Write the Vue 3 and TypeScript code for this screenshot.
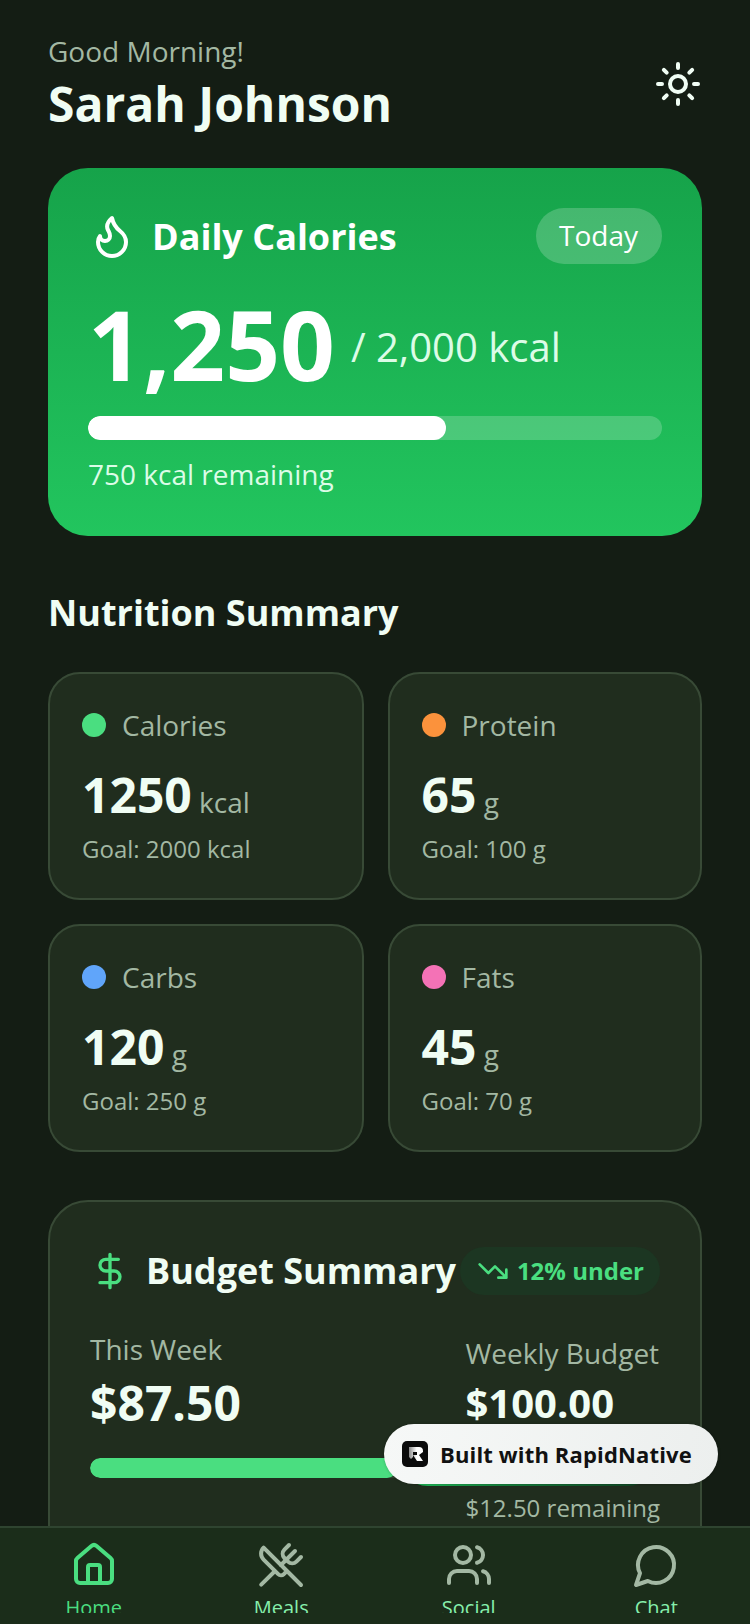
<script setup lang="ts">
const stats = [
  { label: 'Calories', value: '1250', unit: 'kcal', goal: 'Goal: 2000 kcal', color: '#4ade80' },
  { label: 'Protein', value: '65', unit: 'g', goal: 'Goal: 100 g', color: '#fb923c' },
  { label: 'Carbs', value: '120', unit: 'g', goal: 'Goal: 250 g', color: '#60a5fa' },
  { label: 'Fats', value: '45', unit: 'g', goal: 'Goal: 70 g', color: '#f472b6' },
]
</script>

<template>
  <div class="app">
    <main class="scroll">
      <header class="header">
        <div>
          <div class="greet">Good Morning!</div>
          <div class="name">Sarah Johnson</div>
        </div>
        <svg class="ic48 sun" viewBox="0 0 24 24" fill="none" stroke="#f0fdf4" stroke-width="2" stroke-linecap="round" stroke-linejoin="round">
          <circle cx="12" cy="12" r="4" />
          <path d="M12 2v2M12 20v2M4.93 4.93l1.41 1.41M17.66 17.66l1.41 1.41M2 12h2M20 12h2M6.34 17.66l-1.41 1.41M19.07 4.93l-1.41 1.41" />
        </svg>
      </header>

      <section class="hero">
        <div class="hero-top">
          <div class="hero-title">
            <svg class="ic48" viewBox="0 0 24 24" fill="none" stroke="#fff" stroke-width="2" stroke-linecap="round" stroke-linejoin="round">
              <path d="M8.5 14.5A2.5 2.5 0 0 0 11 12c0-1.38-.5-2-1-3-1.072-2.143-.224-4.054 2-6 .5 2.5 2 4.9 4 6.5 2 1.6 3 3.5 3 5.5a7 7 0 1 1-14 0c0-1.153.433-2.294 1-3a2.5 2.5 0 0 0 2.5 2.5z" />
            </svg>
            <span>Daily Calories</span>
          </div>
          <div class="today">Today</div>
        </div>
        <div class="hero-num">
          <span class="big">1,250</span>
          <span class="of">/ 2,000 kcal</span>
        </div>
        <div class="track"><div class="fill"></div></div>
        <div class="remain">750 kcal remaining</div>
      </section>

      <h2 class="section">Nutrition Summary</h2>
      <div class="grid">
        <div v-for="s in stats" :key="s.label" class="stat">
          <div class="stat-head">
            <span class="dot" :style="{ background: s.color }"></span>
            <span class="stat-label">{{ s.label }}</span>
          </div>
          <div class="stat-val"><b>{{ s.value }}</b> <span>{{ s.unit }}</span></div>
          <div class="goal">{{ s.goal }}</div>
        </div>
      </div>

      <section class="budget">
        <div class="b-top">
          <div class="b-title">
            <svg class="ic40" viewBox="0 0 24 24" fill="none" stroke="#4ade80" stroke-width="2" stroke-linecap="round" stroke-linejoin="round">
              <path d="M12 2v20M17 5H9.5a3.5 3.5 0 0 0 0 7h5a3.5 3.5 0 0 1 0 7H6" />
            </svg>
            <span>Budget Summary</span>
          </div>
          <div class="under">
            <svg class="ic32" viewBox="0 0 24 24" fill="none" stroke="#4ade80" stroke-width="2" stroke-linecap="round" stroke-linejoin="round">
              <path d="M22 17l-8.5-8.5-5 5L2 7M16 17h6v-6" />
            </svg>
            <span>12% under</span>
          </div>
        </div>
        <div class="b-body">
          <div class="b-left">
            <div class="b-label">This Week</div>
            <div class="b-val">$87.50</div>
            <div class="b-track"><div class="b-fill"></div></div>
          </div>
          <div class="b-right">
            <div class="b-label">Weekly Budget</div>
            <div class="b-val-r">$100.00</div>
            <div class="b-rem">$12.50 remaining</div>
          </div>
        </div>
      </section>
    </main>

    <nav class="tabs">
      <div class="tab">
        <svg class="ic48" viewBox="0 0 24 24" fill="none" stroke="#4ade80" stroke-width="2" stroke-linecap="round" stroke-linejoin="round">
          <path d="M15 21v-8a1 1 0 0 0-1-1h-4a1 1 0 0 0-1 1v8" />
          <path d="M3 10a2 2 0 0 1 .709-1.528l7-5.999a2 2 0 0 1 2.582 0l7 5.999A2 2 0 0 1 21 10v9a2 2 0 0 1-2 2H5a2 2 0 0 1-2-2z" />
        </svg>
        <span class="active">Home</span>
      </div>
      <div class="tab">
        <svg class="ic48" viewBox="0 0 24 24" fill="none" stroke="#a3b8a3" stroke-width="2" stroke-linecap="round" stroke-linejoin="round">
          <path d="m16 2-2.3 2.3a3 3 0 0 0 0 4.2l1.8 1.8a3 3 0 0 0 4.2 0L22 8" />
          <path d="M15 15 3.3 3.3a4.2 4.2 0 0 0 0 6l7.3 7.3c.7.7 2 .7 2.8 0L15 15Zm0 0 7 7" />
          <path d="m2.1 21.8 6.4-6.3" />
          <path d="m19 5-7 7" />
        </svg>
        <span>Meals</span>
      </div>
      <div class="tab">
        <svg class="ic48" viewBox="0 0 24 24" fill="none" stroke="#a3b8a3" stroke-width="2" stroke-linecap="round" stroke-linejoin="round">
          <path d="M16 21v-2a4 4 0 0 0-4-4H6a4 4 0 0 0-4 4v2" />
          <circle cx="9" cy="7" r="4" />
          <path d="M22 21v-2a4 4 0 0 0-3-3.87" />
          <path d="M16 3.13a4 4 0 0 1 0 7.75" />
        </svg>
        <span>Social</span>
      </div>
      <div class="tab">
        <svg class="ic48" viewBox="0 0 24 24" fill="none" stroke="#a3b8a3" stroke-width="2" stroke-linecap="round" stroke-linejoin="round">
          <path d="M7.9 20A9 9 0 1 0 4 16.1L2 22Z" />
        </svg>
        <span>Chat</span>
      </div>
    </nav>

    <div class="built">
      <span class="logo">
        <svg viewBox="0 0 26 26" width="26" height="26">
          <defs>
            <linearGradient id="rg" x1="0" x2="1" y1="0" y2="0">
              <stop offset="0" stop-color="#8a8a8a" />
              <stop offset="0.55" stop-color="#fff" />
            </linearGradient>
          </defs>
          <rect width="26" height="26" rx="5" fill="#0b0b0b" />
          <path d="M7 6h10a4 4 0 0 1 4 4v1l-4 3 4 6h-6l-4-6h4v-3H11v5l-2 2-2-2z" fill="url(#rg)" />
        </svg>
      </span>
      <span>Built with RapidNative</span>
    </div>
  </div>
</template>

<style>
html, body { margin: 0; background: #141d14; }
</style>

<style scoped>
.app {
  position: relative;
  width: 750px;
  height: 1624px;
  display: flex;
  flex-direction: column;
  overflow: hidden;
  background: #141d14;
  font-family: "Open Sans", "Noto Sans", sans-serif;
  color: #f0fdf4;
}
.scroll {
  flex: 1;
  min-height: 0;
  overflow: hidden;
  padding: 31px 48px 0;
}
.ic48 { width: 48px; height: 48px; flex: none; display: block; }
.ic40 { width: 40px; height: 40px; flex: none; display: block; }
.ic32 { width: 32px; height: 32px; flex: none; display: block; }
.sun { margin-top: 3px; }
.header { display: flex; justify-content: space-between; align-items: center; }
.greet { font-size: 28px; line-height: 40px; color: #a3b8a3; }
.name { font-size: 48px; line-height: 60px; font-weight: 700; margin-top: 3px; }
.hero {
  margin-top: 34px;
  height: 368px;
  box-sizing: border-box;
  padding: 40px;
  border-radius: 40px;
  background: linear-gradient(180deg, #16a34a, #22c55e);
  color: #fff;
}
.hero-top { display: flex; justify-content: space-between; align-items: center; }
.hero-title { display: flex; align-items: center; gap: 16px; font-size: 36px; font-weight: 700; }
.today {
  height: 56px;
  line-height: 54px;
  padding: 0 24px 0 23px;
  border-radius: 28px;
  background: rgba(255, 255, 255, 0.2);
  font-size: 28px;
}
.hero-num { display: flex; align-items: flex-end; gap: 16px; margin-top: 20px; }
.big { font-size: 96px; line-height: 120px; font-weight: 700; }
.of { font-size: 40px; line-height: 56px; color: #dcfce7; margin-bottom: 29px; }
.track { height: 24px; border-radius: 12px; background: rgba(255, 255, 255, 0.2); margin-top: 12px; overflow: hidden; }
.fill { width: 62.4%; height: 100%; border-radius: 12px; background: #fff; }
.remain { margin-top: 14px; font-size: 28px; line-height: 40px; color: #dcfce7; }
.section { margin: 53px 0 0; font-size: 36px; line-height: 48px; font-weight: 700; }
.grid { margin-top: 35px; display: grid; grid-template-columns: 315.5px 314.5px; gap: 24px; }
.stat {
  box-sizing: border-box;
  height: 228px;
  padding: 31px 32px 32px;
  border: 2px solid #384a36;
  border-radius: 32px;
  background: #202d1e;
}
.stat-head { display: flex; align-items: center; gap: 16px; }
.dot { width: 24px; height: 24px; border-radius: 50%; }
.stat-label { font-size: 28px; line-height: 40px; color: #a3b8a3; }
.stat-val { margin-top: 20px; line-height: 60px; color: #a3b8a3; font-size: 28px; }
.stat-val b { font-size: 48px; font-weight: 700; color: #f0fdf4; }
.goal { font-size: 24px; line-height: 32px; color: #a3b8a3; margin-top: 1px; }
.budget {
  box-sizing: border-box;
  margin-top: 48px;
  height: 440px;
  padding: 44px 40px 40px;
  border: 2px solid #384a36;
  border-radius: 40px;
  background: #202d1e;
}
.b-top { display: flex; justify-content: space-between; align-items: center; }
.b-title { display: flex; align-items: center; gap: 16px; font-size: 36px; font-weight: 700; }
.under {
  display: flex;
  align-items: center;
  gap: 8px;
  height: 48px;
  padding: 0 16px 0 17px;
  border-radius: 24px;
  background: #1c3622;
  font-size: 24px;
  font-weight: 700;
  color: #4ade80;
}
.b-body { display: flex; justify-content: space-between; gap: 24px; margin-top: 34px; }
.b-left { flex: 1; }
.b-label { font-size: 28px; line-height: 40px; color: #a3b8a3; }
.b-val { font-size: 48px; line-height: 60px; font-weight: 700; margin-top: 4px; }
.b-val-r { font-size: 40px; line-height: 60px; font-weight: 700; }
.b-track { height: 20px; border-radius: 10px; background: #304530; margin-top: 25px; overflow: hidden; }
.b-fill { width: 87.5%; height: 100%; border-radius: 10px; background: #4ade80; }
.b-right { margin-top: 4px; }
.b-rem { font-size: 24px; line-height: 36px; color: #a3b8a3; margin-top: 57px; }
.tabs {
  flex: none;
  box-sizing: border-box;
  height: 98px;
  display: flex;
  justify-content: space-around;
  border-top: 2px solid #2f4430;
  background: #1b2d1a;
  overflow: hidden;
}
.tab {
  width: 120px;
  height: 85px;
  overflow: hidden;
  display: flex;
  flex-direction: column;
  align-items: center;
  padding-top: 13px;
  box-sizing: border-box;
  font-size: 20px;
  line-height: 28px;
  color: #86efac;
}
.tab span { margin-top: 5px; }
.tab .active { color: #4ade80; }
.built {
  position: absolute;
  left: 384px;
  top: 1424px;
  width: 334px;
  height: 60px;
  box-sizing: border-box;
  padding-left: 18px;
  display: flex;
  align-items: center;
  gap: 12px;
  isolation: isolate;
  color: #111;
  font-size: 22px;
  letter-spacing: 0.15px;
  font-weight: 700;
}
.built::before {
  content: "";
  position: absolute;
  inset: 2px 60px -2px 14px;
  z-index: -2;
  border-radius: 30px;
  background: linear-gradient(90deg, #22c55e, #15803d 40%, #0f3d20);
}
.built::after {
  content: "";
  position: absolute;
  inset: 0;
  z-index: -1;
  border-radius: 30px;
  background: linear-gradient(100deg, #f6f8f7, #ecefee);
  box-shadow: 0 0 3px rgba(0, 0, 0, 0.25);
}
.logo { display: flex; }
</style>
